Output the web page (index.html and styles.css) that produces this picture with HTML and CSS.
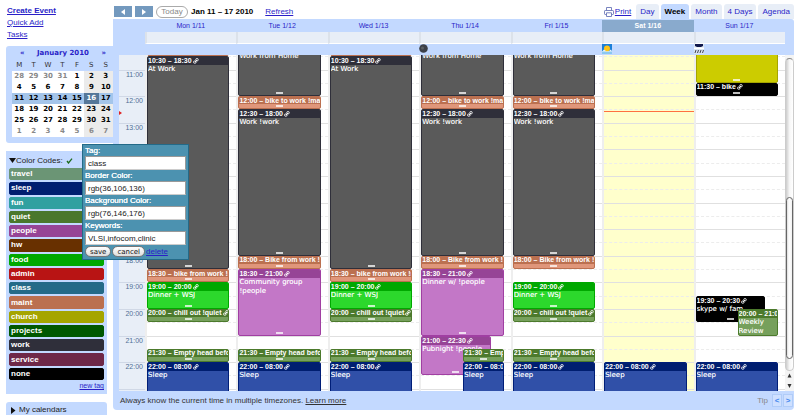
FILE: index.html
```html
<!DOCTYPE html>
<html lang="en">
<head>
    <meta charset="UTF-8">
    <meta name="viewport" content="width=device-width, initial-scale=1.0">
    <title>Calendar</title>
    <link rel="stylesheet" href="styles.css">
</head>
<body>
    <div class="sidebar">
        <div class="actions">
            <a href="#" class="strong">Create Event</a>
            <a href="#">Quick Add</a>
            <a href="#">Tasks</a>
        </div>

        <div class="mini">
            <div class="mini-title">
                <a href="#">«</a>
                <span>January 2010</span>
                <a href="#">»</a>
            </div>
            <table>
                <thead>
                    <tr><th>M</th><th>T</th><th>W</th><th>T</th><th>F</th><th>S</th><th>S</th></tr>
                </thead>
                <tbody id="mini-days"></tbody>
            </table>
        </div>

        <div class="codes">
            <div class="codes-title">
                <svg width="7" height="5" viewBox="0 0 7 5"><path d="M0 0h7L3.500 5z" fill="#111"/></svg>
                <span>Color Codes:</span>
                <svg class="check" width="7" height="6" viewBox="0 0 7 6"><path d="M1 3l1.500 2L6 .7" fill="none" stroke="#1c6b1c" stroke-width="1.300"/></svg>
            </div>
            <div class="tags" id="tags"></div>
            <a href="#" class="new-tag">new tag</a>

            <form class="popup">
                <label for="tag">Tag:</label>
                <input type="text" id="tag" value="class">
                <label for="border">Border Color:</label>
                <input type="text" id="border" value="rgb(36,106,136)">
                <label for="background">Background Color:</label>
                <input type="text" id="background" value="rgb(76,146,176)">
                <label for="keywords">Keywords:</label>
                <input type="text" id="keywords" value="VLSI,infocom,clinic">
                <div class="popup-actions">
                    <button type="button">save</button>
                    <button type="button">cancel</button>
                    <a href="#">delete</a>
                </div>
            </form>
        </div>

        <div class="my-calendars">
            <svg width="5" height="7" viewBox="0 0 5 7"><path d="M0 0v7l4.500-3.500z" fill="#111"/></svg>
            <span>My calendars</span>
        </div>
    </div>

    <div class="main">
        <div class="toolbar">
            <button class="nav" aria-label="Previous"><svg width="4" height="6" viewBox="0 0 4 6"><path d="M4 0v6L0 3z" fill="#fff"/></svg></button>
            <button class="nav" aria-label="Next"><svg width="4" height="6" viewBox="0 0 4 6"><path d="M0 0v6l4-3z" fill="#fff"/></svg></button>
            <button class="today">Today</button>
            <span class="range">Jan 11 – 17 2010</span>
            <a href="#">Refresh</a>
            <div class="views">
                <a href="#" class="print">
                    <svg width="10" height="10" viewBox="0 0 10 10" fill="none" stroke="#6a76b8" stroke-width=".9"><path d="M2.500 3.500v-3h5v3M2.500 7.500H1.200Q.5 7.500.5 6.800V4.200q0-.7.7-.7h7.600q.7 0 .7.7v2.600q0 .7-.7.7H7.500M2.500 5.800h5v3.700h-5z"/></svg>
                    <span>Print</span>
                </a>
                <a href="#" class="tab">Day</a>
                <a href="#" class="tab active">Week</a>
                <a href="#" class="tab">Month</a>
                <a href="#" class="tab">4 Days</a>
                <a href="#" class="tab">Agenda</a>
            </div>
        </div>

        <div class="panel">
            <div class="week-row" id="names"><span></span></div>
            <div class="week-row all-day"><span></span><i></i><i></i><i></i><i></i><i></i><i></i><i></i></div>
            <div class="week-row weather">
                <span></span><i></i><i></i><i></i>
                <i><svg width="9" height="9" viewBox="0 0 9 9"><circle cx="4.500" cy="4.500" r="4.300" fill="#3c4048"/><circle cx="3.500" cy="4" r="1.500" fill="#5c6064"/></svg></i>
                <i></i>
                <i><svg width="10" height="10" viewBox="0 0 10 10"><path fill="#1b7fd8" d="M0 0h10v10H0z"/><path fill="#8cc8f0" d="M0 7h10v3H0z"/><circle cx="5" cy="4.500" r="3" fill="#ffc414"/><path d="M0 7.500l2-2 2 1.500h3l2-1.500 1 2z" fill="#eef6fa"/></svg></i>
                <i><svg width="10" height="10" viewBox="0 0 10 10"><path fill="#d8e4f2" d="M0 0h10v10H0z"/><path fill="#10184c" d="M1 0h8v2L7 3H3L1 2z"/><path fill="#fff" d="M0 3.500h10V5H0z"/><path d="M1 9l1-3M3.500 9l1-3M6 9l1-3M8.500 9l1-3" stroke="#445"/></svg></i>
            </div>

            <div class="scroller">
                <div class="week-row grid" id="grid"></div>
                <div class="scrollbar">
                    <div class="track"><div class="thumb"></div></div>
                    <svg width="9" height="10" viewBox="0 0 9 10"><path d="M2.500 6.500h4l-2-4z" fill="#333"/></svg>
                    <svg width="9" height="10" viewBox="0 0 9 10"><path d="M2.500 3h4l-2 4z" fill="#333"/></svg>
                </div>
            </div>

            <div class="footer">
                <span>Always know the current time in multiple timezones. <a href="#">Learn more</a></span>
                <div class="tip">
                    <span>Tip</span>
                    <button>&lt;</button>
                    <button>&gt;</button>
                </div>
            </div>
        </div>
    </div>

    <script src="script.js"></script>
</body>
</html>
```

FILE: styles.css
```css
* {
    box-sizing: border-box;
}
body {
    margin: 0;
    height: 100vh;
    display: grid;
    grid-template-columns: 107px minmax(0, 1fr);
    grid-template-rows: minmax(0, 1fr);
    padding: 0 6px 0 6px;
    overflow: hidden;
    background: #fff;
    color: #222;
    font: 8px/12px "Liberation Sans", Arial, sans-serif;
}
a {
    color: #2a1fc8;
}
svg {
    display: block;
    flex: none;
}
button, input {
    font: inherit;
    margin: 0;
    padding: 0;
}

/* sidebar */
.sidebar {
    display: flex;
    flex-direction: column;
    padding-top: 5px;
}
.sidebar > div {
    flex: none;
}
.actions {
    display: flex;
    flex-direction: column;
    align-items: flex-start;
    padding: 0 1px 5px;
}
.strong {
    font-weight: bold;
}
.mini {
    background: #c3d9ff;
    border-radius: 3px 0 0 3px;
    padding: 2px 0 6px 6px;
    font: bold 7px/11px "DejaVu Sans", Verdana, sans-serif;
}
.mini-title {
    display: flex;
    justify-content: space-between;
    padding: 0 7px 0 8px;
    color: #2a1fc8;
}
.mini-title a {
    text-decoration: none;
}
.mini table {
    width: 100%;
    table-layout: fixed;
    border-collapse: collapse;
}
.mini th, .mini td {
    height: 11px;
    padding: 0;
    text-align: center;
    line-height: 11px;
}
.mini th {
    height: 12px;
    font-weight: normal;
    color: #333;
}
.mini td {
    background: #fff;
    color: #000;
}
.mini td.weekend {
    background: #ebebeb;
}
.mini td.other {
    color: #888;
}
.mini .current td {
    background: #a4c5ea;
}
.mini .current td.now {
    background: #557799;
    color: #fff;
}

.codes {
    position: relative;
    width: 101px;
    margin-top: 8px;
    padding: 2px 3px 2px;
    background: #c3d9ff;
}
.codes-title {
    display: flex;
    align-items: center;
    height: 15px;
}
.codes-title .check {
    margin-left: 3px;
}
.tags {
    display: grid;
    grid-auto-rows: minmax(0, 1fr);
    gap: 2px;
    height: 212px;
}
.tag {
    display: flex;
    align-items: center;
    padding-left: 1px;
    border: 1px solid;
    border-radius: 2px;
    color: #fff;
    font-weight: bold;
    line-height: 10px;
}
.new-tag {
    display: block;
    text-align: right;
    font-size: 7px;
    line-height: 12px;
}
.my-calendars {
    display: flex;
    align-items: center;
    gap: 3px;
    width: 101px;
    height: 16px;
    margin-top: 8px;
    padding: 0 5px;
    background: #c3d9ff;
    border-radius: 3px 3px 0 0;
}

.popup {
    position: absolute;
    left: 76px;
    top: -7px;
    z-index: 5;
    display: flex;
    flex-direction: column;
    width: 107px;
    padding: 0 2px 1px;
    border: 1px solid rgb(36, 106, 136);
    background: rgb(76, 146, 176);
    line-height: 11px;
}
.popup label {
    color: #fff;
    text-shadow: 0 0 0 #fff;
}
.popup input {
    width: 101px;
    height: 14px;
    padding: 0 2px;
    border: 1px solid #999;
    border-bottom-color: #ccc;
    background: #fff;
    color: #222;
}
.popup-actions {
    display: flex;
    align-items: center;
    gap: 1px;
    height: 13px;
}
.popup button {
    height: 11px;
    padding: 0 4px;
    border: 1px solid #777;
    border-radius: 6px;
    background: linear-gradient(#fff, #ddd);
    color: #111;
    font: 7px/8px "DejaVu Sans", Verdana, sans-serif;
}

/* toolbar */
.main {
    display: flex;
    flex-direction: column;
    min-width: 0;
    padding-bottom: 5px;
}
.toolbar {
    display: flex;
    align-items: center;
    gap: 3px;
    flex: none;
    height: 19px;
    padding-top: 4px;
}
.nav {
    display: flex;
    align-items: center;
    justify-content: center;
    width: 18px;
    height: 11px;
    border: 0;
    background: #7399be;
}
.nav:first-child {
    margin-left: 1px;
}
.today {
    width: 32px;
    height: 12px;
    border: 1px solid #aaa;
    border-radius: 6px;
    background: #fff;
    color: #888;
    line-height: 9px;
}
.range {
    margin-right: 9px;
    color: #000;
    font-weight: bold;
}
.views {
    display: flex;
    align-items: center;
    gap: 2px;
    margin-left: auto;
}
.print {
    display: flex;
    align-items: center;
    gap: 1px;
    margin-right: 3px;
    text-decoration: none;
}
.print span {
    text-decoration: underline;
}
.tab {
    padding: 2px 4px 1px;
    border-radius: 3px 3px 0 0;
    background: #e8eef7;
    text-decoration: none;
}
.tab.active {
    background: #c3d9ff;
    color: #000;
    font-weight: bold;
}

/* week */
.panel {
    flex: 1;
    display: flex;
    flex-direction: column;
    min-height: 0;
    padding-left: 6px;
    background: #c3d9ff;
    border-radius: 0 3px 4px 4px;
}
.week-row {
    display: grid;
    grid-template-columns: 26px repeat(7, minmax(0, 1fr));
    margin-right: 9px;
}
#names {
    height: 13px;
    padding-top: 1px;
    color: #2a1fc8;
    font-size: 7px;
    text-align: center;
}
#names .today-name {
    background: #89aacd;
    color: #fff;
    font-weight: bold;
}
.all-day {
    height: 12px;
}
.all-day i {
    border-left: 2px solid #dce2ea;
    border-bottom: 1px solid #fff;
    background: #e8eef7;
}
.weather {
    height: 11px;
}
.scroller {
    flex: 1;
    display: flex;
    min-height: 0;
    overflow: hidden;
    background: #fff;
}
.grid {
    flex: 1;
    grid-template-rows: minmax(0, 1fr);
    height: 359px;
    margin: -12px 0 0;
}
.hours, .day {
    position: relative;
    display: grid;
    grid-template-columns: minmax(0, 1fr);
    grid-template-rows: repeat(27, minmax(0, 1fr));
    min-width: 0;
}
.hours {
    background: #e8eef7;
    color: #4f6f96;
    font-size: 7px;
    line-height: 8px;
    text-align: right;
}
.hour {
    padding-right: 2px;
    border-top: 1px solid #d0d8e6;
}
.day {
    border-left: 2px solid #eee;
}
.day.current {
    background: #ffffcc;
}
.slot {
    grid-column: 1;
    border-top: 1px solid #e0e0e0;
}
.slot.half {
    border-top: 1px dashed #ececec;
}
.now-line {
    position: absolute;
    left: 0;
    right: 0;
    height: 1px;
    background: #ff7040;
}
.now-arrow {
    position: absolute;
    left: 0;
    border: 2px solid transparent;
    border-left: 3px solid #e02020;
}
.event {
    grid-column: 1;
    display: flex;
    flex-direction: column;
    min-width: 0;
    min-height: 0;
    margin-right: 7px;
    border: 1px solid;
    border-radius: 2px;
    overflow: hidden;
    color: #fff;
    font: 7px/9px "DejaVu Sans", Verdana, sans-serif;
}
.event.left {
    margin-right: 20px;
}
.event.right {
    margin-left: 42px;
}
.event header {
    display: flex;
    align-items: center;
    gap: 1px;
    height: 8px;
    flex: none;
    font: bold 7px/8px "Liberation Sans", Arial, sans-serif;
    white-space: nowrap;
}
.event.short header {
    height: 7px;
}
.event p {
    margin: 0;
    text-shadow: 0 0 0 rgba(255, 255, 255, .5);
}
.handle {
    width: 7px;
    height: 2px;
    flex: none;
    margin: auto auto 1px;
    background: #fff;
    opacity: .75;
}

.work { background: #5a5a5a; border-color: #2f2f3a; }
.work header { background: #2f2f3a; }
.maint { background: #e0967a; border-color: #bb7050; }
.maint header { background: #bb7050; }
.food { background: #2cd82c; border-color: #00a800; }
.food header { background: #00a800; }
.quiet { background: #76a05c; border-color: #4c7a2c; }
.quiet header { background: #4c7a2c; }
.people { background: #c377c7; border-color: #a03fa2; }
.people header { background: #964496; }
.sleep { background: #3050a8; border-color: #001e78; }
.sleep header { background: #001e70; }
.church { background: #cccc00; border-color: #a5a500; }
.church header { background: #a5a500; }
.none { background: #000; border-color: #000; }

.scrollbar {
    display: flex;
    flex-direction: column;
    width: 9px;
    padding-top: 3px;
    background: #f4f4f4;
}
.track {
    flex: 1;
    display: flex;
    align-items: flex-end;
    padding-bottom: 11px;
    border: 1px solid #ccc;
    border-top-color: #888;
    border-radius: 5px;
    background: linear-gradient(90deg, #ccc, #f6f6f6 50%, #fff);
}
.thumb {
    width: 100%;
    height: 54%;
    border: 1px solid #666;
    border-radius: 4px;
    background: linear-gradient(90deg, #ddd, #fff 40%, #f2f2f2);
}

.footer {
    display: flex;
    align-items: center;
    justify-content: space-between;
    flex: none;
    height: 19px;
    padding: 0 1px;
    color: #333;
}
.footer a {
    color: #333;
}
.tip {
    display: flex;
    align-items: center;
    gap: 1px;
    color: #888;
}
.tip span {
    margin-right: 3px;
}
.tip button {
    width: 10px;
    height: 13px;
    border: 1px solid #b0ccf8;
    background: #cfe0ff;
    color: #4488ee;
    font-weight: bold;
    line-height: 10px;
}
```

FILE: script.js
```js
const tags = [
    ['travel', '#6b9575'], ['sleep', '#001e70'], ['fun', '#30a0a0'], ['quiet', '#4a772c'],
    ['people', '#964496'], ['hw', '#683000'], ['food', '#00a800'], ['admin', '#b81414'],
    ['class', '#246a88'], ['maint', '#bb7050'], ['church', '#a5a500'], ['projects', '#005800'],
    ['work', '#2f2f3a'], ['service', '#6e2848'], ['none', '#000000']
];

const names = ['Mon 1/11', 'Tue 1/12', 'Wed 1/13', 'Thu 1/14', 'Fri 1/15', 'Sat 1/16', 'Sun 1/17'];

// [tag, start hour, end hour, header text, body text, options]
const officeDay = [
    ['maint', 10, 10.5, '', ''],
    ['work', 10.5, 18.5, '10:30 – 18:30', 'At Work', 'link'],
    ['maint', 18.5, 19, '18:30 – bike from work !maint', ''],
    ['food', 19, 20, '19:00 – 20:00', 'Dinner + WSJ', 'link'],
    ['quiet', 20, 20.5, '20:00 – chill out !quiet', '', 'link'],
    ['quiet', 21.5, 22, '21:30 – Empty head before bed', ''],
    ['sleep', 22, 23.5, '22:00 – 08:00', 'Sleep', 'link']
];
const homeDay = [
    ['work', 10, 12, '', 'Work from Home'],
    ['maint', 12, 12.5, '12:00 – bike to work !maint', ''],
    ['work', 12.5, 18, '12:30 – 18:00', 'Work !work', 'link'],
    ['maint', 18, 18.5, '18:00 – Bike from work !maint', '']
];
const sleep = ['sleep', 22, 23.5, '22:00 – 08:00', 'Sleep', 'link'];

const days = [
    officeDay,
    homeDay.concat([
        ['people', 18.5, 21, '18:30 – 21:00', 'Community group !people', 'link'],
        officeDay[5],
        sleep
    ]),
    officeDay,
    homeDay.concat([
        ['people', 18.5, 21, '18:30 – 21:00', 'Dinner w/ !people', 'link'],
        ['people', 21, 22.5, '21:00 – 22:30', 'Pubnight !people', 'link left'],
        ['quiet', 21.5, 22, '21:30 – Empty head before bed', '', 'right'],
        ['sleep', 22, 23.5, '22:00 – 08:00', 'Sleep', 'right']
    ]),
    homeDay.concat(officeDay.slice(3)),
    [sleep],
    [
        ['church', 10, 11.5, '', ''],
        ['none', 11.5, 12, '11:30 – bike', '', 'link'],
        ['none', 19.5, 20.5, '19:30 – 20:30', 'skype w/ fam', 'link left'],
        ['quiet', 20, 21, '20:00 – 21:00', 'Weekly Review', 'right'],
        sleep
    ]
];

const linkIcon = '<svg width="6" height="6" viewBox="0 0 6 6" fill="none" stroke="#fff" stroke-width=".9"><rect x="2.800" y=".6" width="2.400" height="2.200" rx=".8"/><rect x=".6" y="3" width="2.400" height="2.200" rx=".8"/><path d="M2 4l2-2"/></svg>';

const firstHour = 10;
const rows = 27;
const now = 12.57;

function row(hour) {
    return (hour - firstHour) * 2 + 1;
}

function eventHtml([tag, start, end, header, body, options = '']) {
    const short = end - start < 1 ? 'short' : '';
    const icon = options.includes('link') ? linkIcon : '';
    const place = options.replace('link', '');
    return `<div class="event ${tag} ${short} ${place}" style="grid-row: ${row(start)} / ${row(end)}">
        <header><span>${header}</span>${icon}</header>
        ${body ? `<p>${body}</p>` : ''}
        <div class="handle"></div>
    </div>`;
}

document.getElementById('tags').innerHTML = tags
    .map(([name, color]) => `<div class="tag" style="background: ${color}; border-color: ${color}">${name}</div>`)
    .join('');

document.getElementById('names').innerHTML += names
    .map((name, i) => `<span class="${i === 5 ? 'today-name' : ''}">${name}</span>`)
    .join('');

// mini month, starts on Monday Dec 28
let miniHtml = '';
for (let week = 0; week < 6; week++) {
    miniHtml += `<tr class="${week === 2 ? 'current' : ''}">`;
    for (let d = 0; d < 7; d++) {
        const date = new Date(2009, 11, 28 + week * 7 + d);
        const classes = [];
        if (d > 4) classes.push('weekend');
        if (date.getMonth() !== 0) classes.push('other');
        if (week === 2 && d === 5) classes.push('now');
        miniHtml += `<td class="${classes.join(' ')}">${date.getDate()}</td>`;
    }
    miniHtml += '</tr>';
}
document.getElementById('mini-days').innerHTML = miniHtml;

// week grid
const nowTop = (now - firstHour) * 2 / rows * 100;
let gridHtml = '<div class="hours">';
for (let hour = firstHour; hour < 24; hour++) {
    const end = Math.min(row(hour) + 2, rows + 1);
    const label = hour === firstHour ? '' : `${hour}:00`;
    gridHtml += `<div class="hour" style="grid-row: ${row(hour)} / ${end}">${label}</div>`;
}
gridHtml += `<div class="now-arrow" style="top: ${nowTop}%"></div></div>`;
days.forEach((events, i) => {
    gridHtml += `<div class="day ${i === 5 ? 'current' : ''}">`;
    for (let r = 1; r <= rows; r++) {
        gridHtml += `<div class="slot ${r % 2 ? '' : 'half'}" style="grid-row: ${r}"></div>`;
    }
    gridHtml += events.map(eventHtml).join('');
    if (i === 5) gridHtml += `<div class="now-line" style="top: ${nowTop}%"></div>`;
    gridHtml += '</div>';
});
document.getElementById('grid').innerHTML = gridHtml;
```
